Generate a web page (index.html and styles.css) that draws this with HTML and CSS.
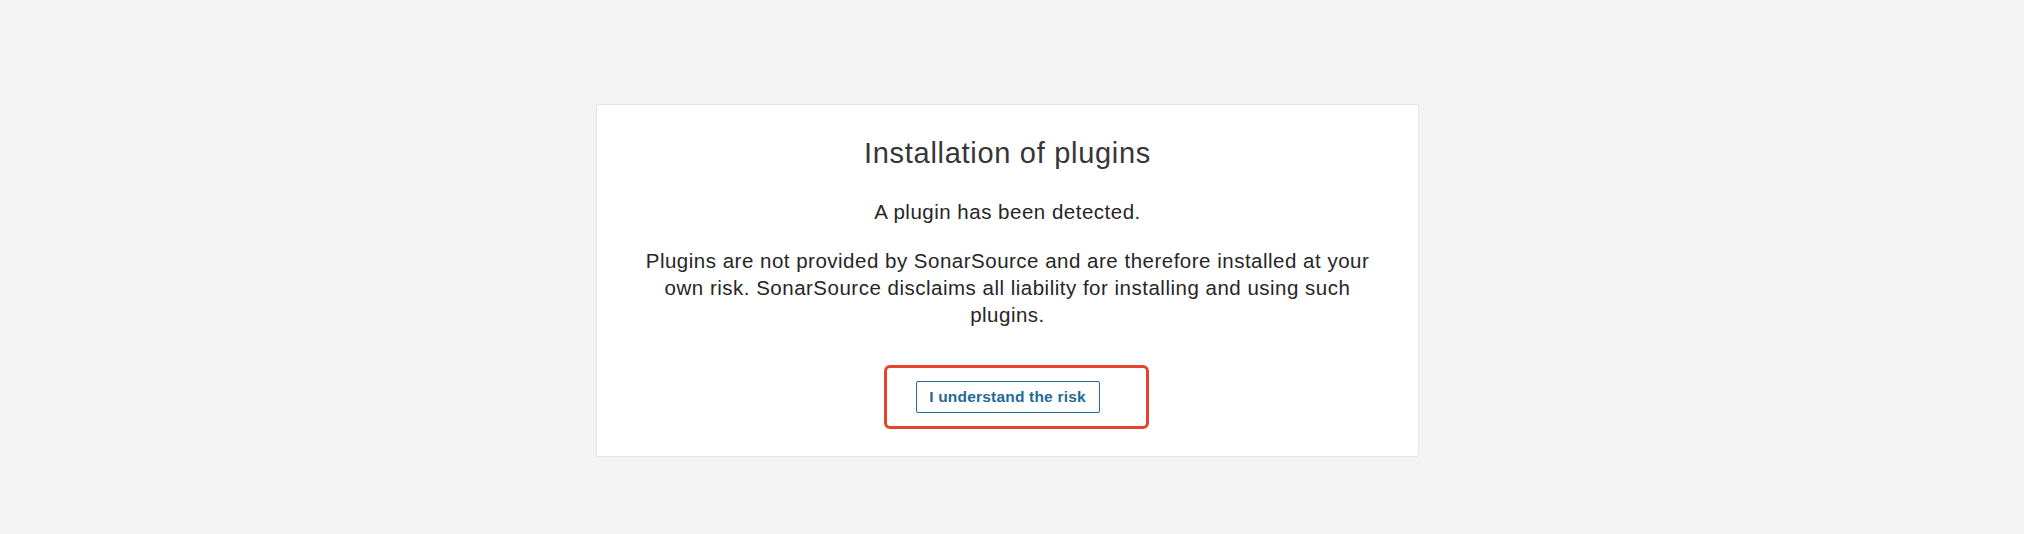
FILE: index.html
```html
<!DOCTYPE html>
<html lang="en">
<head>
<meta charset="utf-8">
<title>Installation of plugins</title>
<link rel="stylesheet" href="styles.css">
</head>
<body>
<main class="page">
  <section class="card">
    <h1 class="card-title">Installation of plugins</h1>
    <p class="card-text">A plugin has been detected.</p>
    <p class="card-text">Plugins are not provided by SonarSource and are therefore installed at your own risk. SonarSource disclaims all liability for installing and using such plugins.</p>
    <div class="actions">
      <div class="action-wrap">
        <button class="btn" type="button">I understand the risk</button>
        <span class="highlight" aria-hidden="true"></span>
      </div>
    </div>
  </section>
</main>
</body>
</html>
```

FILE: styles.css
```css
* { box-sizing: border-box; }

html, body {
  margin: 0;
  padding: 0;
  background: #f3f3f3;
}

body {
  font-family: "Liberation Sans", Arial, sans-serif;
  color: #262626;
}

.page {
  display: flex;
  justify-content: center;
  padding: 104px 9px 0 0;
  min-height: 534px;
}

.card {
  width: 823px;
  height: 353px;
  background: #ffffff;
  border: 1px solid #e4e4e4;
  border-radius: 2px;
  padding: 32px 38px 0;
  text-align: center;
}

.card-title {
  margin: 0 0 29px;
  font-size: 29px;
  line-height: 32px;
  font-weight: 300;
  letter-spacing: 0.7px;
  color: #363636;
}

.card-text {
  margin: 0 0 22px;
  font-size: 20.5px;
  line-height: 27px;
  letter-spacing: 0.5px;
}

.actions {
  display: flex;
  justify-content: center;
  margin-top: 53px;
}

.action-wrap {
  position: relative;
}

.btn {
  display: block;
  width: 184px;
  height: 32px;
  padding: 0;
  background: #ffffff;
  border: 1px solid #236a97;
  border-radius: 2px;
  color: #236a97;
  font-family: "Liberation Sans", Arial, sans-serif;
  font-size: 15.5px;
  font-weight: 700;
  letter-spacing: 0.2px;
}

.highlight {
  position: absolute;
  left: -32px;
  top: -16px;
  width: 265px;
  height: 64px;
  border: 3px solid #e8412c;
  border-radius: 6px;
}
```
